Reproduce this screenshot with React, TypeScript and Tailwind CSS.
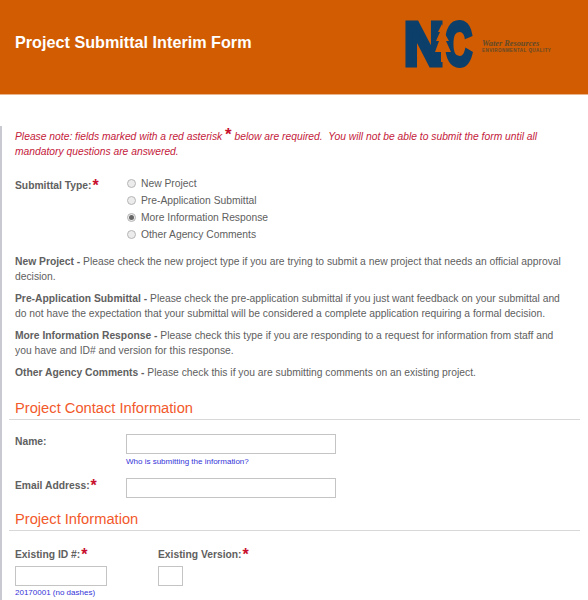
const font = { fontFamily: '"Liberation Sans", Arial, sans-serif' };

function Star({ className = "" }: { className?: string }) {
  return <span className={`font-bold text-[#c8102e] leading-none ${className}`}>*</span>;
}

function Radio({ label, checked = false }: { label: string; checked?: boolean }) {
  return (
    <div className="flex items-center h-[17px]">
      <span className="w-[9px] h-[9px] rounded-full border border-[#b5b5b5] bg-[#ececec] flex items-center justify-center mr-[4px]">
        {checked && <span className="w-[5px] h-[5px] rounded-full bg-[#666]" />}
      </span>
      <span className="ml-[1px]">{label}</span>
    </div>
  );
}

function Logo() {
  return (
    <svg width="160" height="90" viewBox="0 0 160 90" className="block">
      <text x="4" y="65" fontFamily="Liberation Sans" fontWeight="700" fontSize="62" fill="#0d3f6b" stroke="#0d3f6b" strokeWidth="5" textLength="40" lengthAdjust="spacingAndGlyphs">N</text>
      <text x="45" y="65" fontFamily="Liberation Sans" fontWeight="700" fontSize="62" fill="#0d3f6b" stroke="#0d3f6b" strokeWidth="5" textLength="27" lengthAdjust="spacingAndGlyphs">C</text>
      <path d="M42 24 L46 32 L44 32 L49 41 L46 41 L51 52 L44 52 L44 62 L41 62 L41 52 L35 52 L39 41 L36 41 L40 32 L38 32 Z" fill="#d15c02" />
      <text x="82" y="46" fontFamily="Liberation Serif" fontStyle="italic" fontWeight="700" fontSize="8.3" fill="#5f4a2a">Water Resources</text>
      <text x="82" y="51.5" fontFamily="Liberation Sans" fontWeight="700" fontSize="4.5" fill="#5f4a2a" letterSpacing="0.45">ENVIRONMENTAL QUALITY</text>
    </svg>
  );
}

function Heading({ children }: { children: string }) {
  return (
    <div className="border-b border-[#d8d8d8] h-[24px] ml-[7px] mr-[8px]">
      <h2 className="text-[14.7px] leading-[24px] ml-[6px] text-[#f2592b]">{children}</h2>
    </div>
  );
}

export default function App() {
  return (
    <div style={font} className="w-[588px] h-[600px] overflow-hidden bg-white text-[#606060] text-[10.3px]">
      <header className="h-[95px] bg-[#d15c02] border-b border-[#e8b48c] flex items-start justify-between pl-[15px] pr-[28px]">
        <h1 className="text-white font-bold text-[16.2px] leading-5 mt-[32px]">Project Submittal Interim Form</h1>
        <div><Logo /></div>
      </header>
      <main className="border-l-2 border-[#c9c9d2] h-[505px]">
        <div className="pl-[13px] pr-[20px]">
          <p className="italic text-[#c4213a] leading-[15px] mt-[31px] pr-[20px]">
            Please note: fields marked with a red asterisk <span className="text-[17px] leading-none font-bold text-[#c8102e] not-italic">*</span> below are required.&nbsp; You will not be able to submit the form until all mandatory questions are answered.
          </p>
          <div className="flex mt-[17px]">
            <div className="w-[112px] font-bold pt-[2px] flex items-start">
              <span>Submittal Type:</span><Star className="text-[16px] ml-[1px]" />
            </div>
            <div className="-mt-[1px]">
              <Radio label="New Project" />
              <Radio label="Pre-Application Submittal" />
              <Radio label="More Information Response" checked />
              <Radio label="Other Agency Comments" />
            </div>
          </div>
          <div className="leading-[15px] mt-[11px] flex flex-col gap-[7px]">
            <p><b>New Project -</b> Please check the new project type if you are trying to submit a new project that needs an official approval decision.</p>
            <p><b>Pre-Application Submittal -</b> Please check the pre-application submittal if you just want feedback on your submittal and do not have the expectation that your submittal will be considered a complete application requiring a formal decision.</p>
            <p><b>More Information Response -</b> Please check this type if you are responding to a request for information from staff and you have and ID# and version for this response.</p>
            <p><b>Other Agency Comments -</b> Please check this if you are submitting comments on an existing project.</p>
          </div>
        </div>
        <div className="mt-[16px]"><Heading>Project Contact Information</Heading></div>
        <div className="pl-[13px]">
          <div className="flex mt-[14px]">
            <div className="w-[111px] font-bold">Name:</div>
            <div>
              <div className="w-[210px] h-[20px] border border-[#c4c4c4] bg-white" />
              <div className="text-[8px] leading-[10px] mt-[3px] text-[#3434d8]">Who is submitting the information?</div>
            </div>
          </div>
          <div className="flex mt-[11px]">
            <div className="w-[111px] font-bold flex items-start">
              <span>Email Address:</span><Star className="text-[16px] ml-[1px]" />
            </div>
            <div className="w-[210px] h-[20px] border border-[#c4c4c4] bg-white" />
          </div>
        </div>
        <div className="mt-[9px]"><Heading>Project Information</Heading></div>
        <div className="pl-[13px] flex mt-[15px]">
          <div className="w-[143px]">
            <div className="font-bold flex items-start h-[20px] pt-[1px]">
              <span>Existing ID #:</span><Star className="text-[16px] ml-[1px]" />
            </div>
            <div className="w-[92px] h-[20px] border border-[#c4c4c4] bg-white" />
            <div className="text-[8px] leading-[10px] mt-[2px] text-[#3434d8]">20170001 (no dashes)</div>
          </div>
          <div>
            <div className="font-bold flex items-start h-[20px] pt-[1px]">
              <span>Existing Version:</span><Star className="text-[16px] ml-[1px]" />
            </div>
            <div className="w-[25px] h-[20px] border border-[#c4c4c4] bg-white" />
          </div>
        </div>
      </main>
    </div>
  );
}
